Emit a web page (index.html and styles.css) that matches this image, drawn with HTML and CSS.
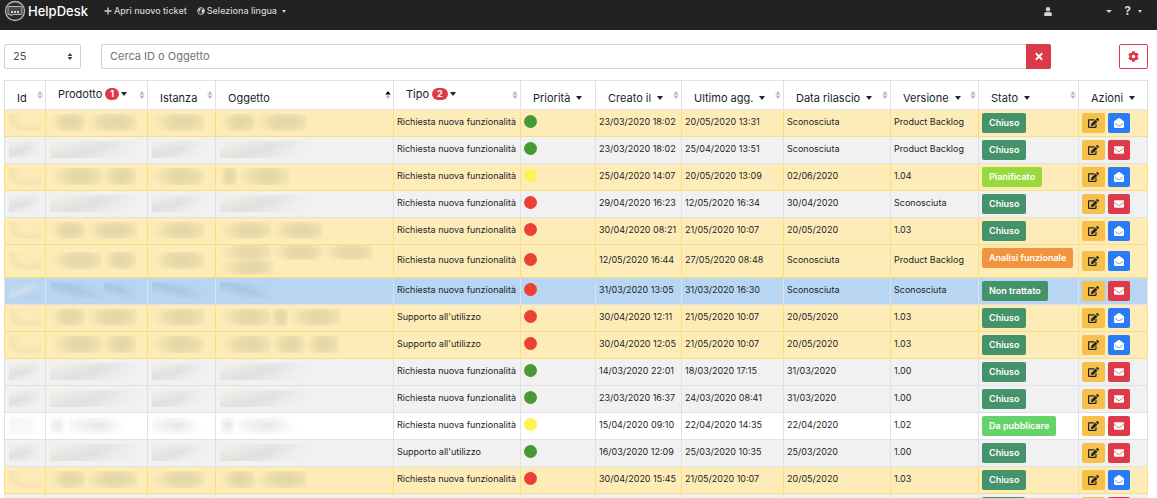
FILE: index.html
```html
<!DOCTYPE html>
<html lang="it">
<head>
<meta charset="utf-8">
<title>HelpDesk</title>
<link rel="stylesheet" href="styles.css">
</head>
<body>
<svg class="sprite" aria-hidden="true">
  <symbol id="i-x" viewBox="0 0 352 512"><path d="M243 256l100-100c12-12 12-32 0-44l-22-23c-13-12-33-12-45 0L176 189 76 89c-12-12-32-12-45 0L9 112c-12 12-12 32 0 44l100 100L9 356c-12 12-12 32 0 44l22 23c13 12 33 12 45 0l100-100 100 100c12 12 32 12 45 0l22-23c12-12 12-32 0-44z"/></symbol>
  <symbol id="i-cog" viewBox="0 0 512 512"><path d="M487.400 315.700l-42.600-24.600c4.300-23.200 4.300-47 0-70.200l42.600-24.600c4.900-2.800 7.100-8.600 5.500-14-11.100-35.600-30-67.800-54.700-94.600-3.800-4.100-10-5.100-14.800-2.300L380.800 110c-17.900-15.400-38.500-27.300-60.800-35.100V25.800c0-5.600-3.900-10.500-9.400-11.700-36.700-8.200-74.300-7.800-109.200 0-5.500 1.200-9.400 6.100-9.400 11.700V75c-22.200 7.900-42.800 19.800-60.800 35.100L88.700 85.500c-4.900-2.800-11-1.900-14.800 2.300-24.700 26.700-43.600 58.900-54.700 94.600-1.700 5.400.6 11.200 5.500 14L67.300 221c-4.300 23.200-4.300 47 0 70.200l-42.600 24.600c-4.900 2.800-7.100 8.600-5.500 14 11.100 35.600 30 67.800 54.700 94.600 3.800 4.100 10 5.100 14.800 2.300l42.600-24.600c17.900 15.400 38.500 27.300 60.800 35.100v49.200c0 5.600 3.900 10.500 9.400 11.700 36.700 8.200 74.300 7.800 109.200 0 5.500-1.200 9.400-6.100 9.400-11.700v-49.200c22.200-7.900 42.800-19.800 60.800-35.100l42.600 24.600c4.900 2.800 11 1.900 14.800-2.300 24.700-26.700 43.600-58.900 54.700-94.600 1.500-5.500-.7-11.300-5.600-14.100zM256 336c-44.100 0-80-35.900-80-80s35.900-80 80-80 80 35.900 80 80-35.900 80-80 80z"/></symbol>
  <symbol id="i-user" viewBox="0 0 448 512"><path d="M224 256a128 128 0 1 0 0-256 128 128 0 0 0 0 256zm90 32h-17a174 174 0 0 1-146 0h-17A134 134 0 0 0 0 422v42c0 26 22 48 48 48h352c26 0 48-22 48-48v-42a134 134 0 0 0-134-134z"/></symbol>
  <symbol id="i-edit" viewBox="0 0 576 512"><path d="M402.600 83.200l90.200 90.200c3.800 3.800 3.800 10 0 13.800L274.400 405.600l-92.800 10.300c-12.400 1.400-22.900-9.100-21.500-21.500l10.300-92.800L388.800 83.200c3.800-3.800 10-3.800 13.800 0zm162-22.900l-48.800-48.800c-15.200-15.200-39.900-15.200-55.200 0l-35.400 35.400c-3.800 3.800-3.800 10 0 13.800l90.200 90.200c3.800 3.800 10 3.800 13.800 0l35.400-35.400c15.200-15.300 15.200-40 0-55.200zM384 346.200V448H64V128h229.800c3.200 0 6.200-1.300 8.500-3.500l40-40c7.600-7.600 2.200-20.500-8.500-20.500H48C21.500 64 0 85.500 0 112v352c0 26.500 21.500 48 48 48h352c26.500 0 48-21.500 48-48V306.200c0-10.700-12.900-16-20.500-8.500l-40 40c-2.200 2.300-3.500 5.300-3.500 8.500z"/></symbol>
  <symbol id="i-mail" viewBox="0 0 512 512"><path d="M502 191c4-3 10 0 10 5v204c0 27-21 48-48 48H48c-27 0-48-21-48-48V196c0-5 6-8 10-5 22 17 52 40 155 114 21 16 57 49 91 48 34 1 71-33 91-48 103-74 133-97 155-114zM256 320c23 0 57-29 74-42 133-96 143-104 173-128 6-4 9-11 9-18v-20c0-26-21-48-48-48H48c-27 0-48 22-48 48v20c0 7 3 14 9 18 30 24 40 32 173 128 17 13 51 42 74 42z"/></symbol>
  <symbol id="i-open" viewBox="0 0 512 512"><path d="M512 464c0 27-21 48-48 48H48c-27 0-48-21-48-48V201a48 48 0 0 1 18-38c25-20 46-36 164-122 17-12 51-41 74-41s57 29 74 41c118 86 139 102 164 122a48 48 0 0 1 18 38zm-66-196c-3-4-7-4-11-2-23 17-57 42-105 76-17 13-51 42-74 42s-57-29-74-42c-48-34-82-59-105-76-4-2-8-2-11 2l-9 13c-3 4-2 9 2 11 23 17 57 42 105 76 19 14 56 48 92 48s73-34 92-48c48-34 82-59 105-76 4-2 5-7 2-11z"/></symbol>
  <symbol id="i-sort" viewBox="0 0 6 8"><path d="M3 0l2.700 3.500H.3z"/><path d="M3 8L.3 4.500h5.400z"/></symbol>
</svg>

<nav class="navbar">
  <a class="brand" href="#">
    <svg class="logo" viewBox="0 0 22 22" stroke="#b9b9b9"><circle cx="11" cy="11" r="9.500" fill="#2c2c2c" stroke-width="1.300"/><path d="M5 6.500h12a1 1 0 0 1 1 1v6a1 1 0 0 1-1 1H9l-2 1.500v-1.500H5a1 1 0 0 1-1-1v-6a1 1 0 0 1 1-1z" fill="#4a4a4a"/><path d="M7 12h2m1 0h2m1 0h2" fill="none" stroke="#fff" stroke-width="1.300"/></svg>
    <span>HelpDesk</span>
  </a>
  <a class="nav-link" href="#"><svg class="ico" viewBox="0 0 8 8"><path d="M4 .5v7M.5 4h7" stroke="currentColor" stroke-width="1.300"/></svg>Apri nuovo ticket</a>
  <a class="nav-link" href="#"><svg class="ico" viewBox="0 0 9 9"><circle cx="4.500" cy="4.500" r="3.800" fill="none" stroke="currentColor"/><path d="M1.200 3l2-1.700 1.300.6-.5 1.300-1 .5.300 1.500-.8.300zM5 3.500l2.800-1.300.6 2-1.600 3-1.300-.2-.2-1.600z" fill="currentColor"/></svg>Seleziona lingua<i class="caret"></i></a>
  <div class="nav-right">
    <a class="user" href="#" aria-label="Utente"><svg class="ico" viewBox="0 0 448 512"><use href="#i-user"/></svg><i class="caret"></i></a>
    <a class="help" href="#" aria-label="Aiuto">?<i class="caret"></i></a>
  </div>
</nav>

<main>
  <form class="toolbar">
    <div class="length">
      <select aria-label="Righe per pagina"><option>25</option><option>50</option><option>100</option></select>
      <svg viewBox="0 0 6 8"><use href="#i-sort"/></svg>
    </div>
    <div class="search">
      <input type="text" placeholder="Cerca ID o Oggetto" aria-label="Cerca ID o Oggetto">
      <button type="button" aria-label="Cancella"><svg class="x" viewBox="0 0 352 512"><use href="#i-x"/></svg></button>
    </div>
    <button type="button" class="settings" aria-label="Impostazioni"><svg viewBox="0 0 512 512"><use href="#i-cog"/></svg></button>
  </form>

  <table class="tickets">
    <colgroup>
      <col class="c-id"><col class="c-prod"><col class="c-ist"><col class="c-ogg"><col class="c-tipo"><col class="c-pri"><col class="c-cre"><col class="c-agg"><col class="c-ril"><col class="c-ver"><col class="c-sta"><col class="c-azi">
    </colgroup>
    <thead><tr id="head"></tr></thead>
    <tbody id="rows"></tbody>
  </table>
</main>
<script src="app.js"></script>
</body>
</html>
```

FILE: styles.css
```css
* { box-sizing: border-box; }
html, body { height: 100%; }
body {
  margin: 0;
  overflow: hidden;
  background: #fff;
  color: #212529;
  font-family: Inter, "Liberation Sans", sans-serif;
  font-size: 9px;
  line-height: 14px;
}
a { color: inherit; text-decoration: none; }
button { padding: 0; border: 0; cursor: pointer; font: inherit; }
svg { display: block; fill: currentColor; }
.sprite { display: none; }

.caret {
  display: inline-block;
  border: solid transparent;
  border-width: 3px 3px 0;
  border-top-color: currentColor;
}

/* Top bar */
.navbar {
  display: flex;
  align-items: center;
  height: 30px;
  padding: 0 15px 8px 4px;
  background: #222;
  color: #d3d3d3;
  font-weight: 500;
}
.brand { display: flex; align-items: center; gap: 2px; margin-right: 16px; color: #fff; font-size: 13px; }
.logo { width: 22px; height: 22px; }
.nav-link { display: flex; align-items: center; gap: 2px; margin-right: 10px; }
.nav-link .ico { width: 8px; height: 8px; }
.nav-link .caret, .help .caret { margin-left: 3px; border-width: 3px 2px 0; }
.nav-right { display: flex; align-items: center; gap: 12px; margin-left: auto; }
.user { display: flex; align-items: center; gap: 54px; }
.user .ico { width: 8px; height: 9px; }
.help { display: flex; align-items: center; gap: 4px; font-size: 12px; font-weight: 700; }

/* Toolbar */
main { padding: 14px 9px 0 4px; }
.toolbar { display: flex; height: 25px; margin-bottom: 11px; }
.length { position: relative; width: 77px; margin-right: 20px; }
.length select {
  appearance: none;
  width: 100%;
  height: 100%;
  padding: 0 8px 2px;
  border: 1px solid #ced4da;
  border-radius: 2px;
  background: #fff;
  color: #495057;
  font: inherit;
  font-size: 11px;
}
.length svg { position: absolute; top: 9px; right: 8px; width: 6px; height: 7px; color: #343a40; pointer-events: none; }
.search { display: flex; flex: 1; margin-right: 68px; }
.search input {
  flex: 1;
  min-width: 0;
  padding: 0 8px 2px;
  border: 1px solid #ced4da;
  border-right: 0;
  border-radius: 2px 0 0 2px;
  font: inherit;
  font-size: 11px;
}
.search input::placeholder { color: #6c757d; opacity: 1; }
.search button, .settings { display: flex; align-items: center; justify-content: center; }
.search button { width: 25px; border-radius: 0 2px 2px 0; background: #dc3a48; color: #fff; }
.search .x { width: 8px; height: 11px; }
.settings { width: 29px; border: 1px solid #dc3a48; border-radius: 2px; background: #fff; color: #dc3a48; }
.settings svg { width: 11px; height: 11px; }

/* Ticket table */
.tickets { width: 100%; border-collapse: collapse; table-layout: fixed; }
.c-id { width: 41px; }
.c-prod, .c-agg { width: 102px; }
.c-ist { width: 68px; }
.c-tipo { width: 127px; }
.c-pri { width: 75px; }
.c-cre { width: 86px; }
.c-ril { width: 107px; }
.c-ver { width: 88px; }
.c-sta { width: 100px; }
.c-azi { width: 69px; }

th, td { border: 1px solid #dee2e6; white-space: nowrap; }
th { height: 29px; padding: 6px 3px 0 12px; font-size: 11px; font-weight: 400; text-align: left; vertical-align: top; }
.th { display: flex; align-items: flex-start; }
.th .label { display: flex; align-items: center; gap: 6px; padding-top: 4px; }
.th .label.counted { gap: 3px; padding-top: 0; }
.th .caret { border-width: 4px 3px 0; }
.th .counted .caret { margin-left: -1px; }
.th .sort { flex: none; width: 6px; height: 8px; margin: 4px -1px 0 auto; color: #b9bcbf; }
.sort.asc .up { fill: #000; }
.count { padding: 0 5px; border-radius: 6px; background: #dc3a48; color: #fff; font-size: 9px; font-weight: 700; line-height: 12px; }

td { height: 27px; padding: 0 3px; background: #f1f1f1; vertical-align: middle; }
.warn td { background: #feecb8; border-color: #fadf7e; }
.sel td { background: #b8d5f1; }
.plain td { background: #fff; }
td.state { padding-top: 3px; vertical-align: top; }
td.kind, td.date { padding-bottom: 2px; }

.dot { display: block; width: 13px; height: 13px; margin-bottom: 3px; border-radius: 50%; }
.dot.g { background: #479a32; }
.dot.y { background: #fef350; }
.dot.r { background: #eb4034; }

.badge { display: inline-block; padding: 0 7px; border-radius: 2px; background: #45936a; color: #fff; font-weight: 600; line-height: 20px; vertical-align: top; }
.badge.plan { background: #96da3d; }
.badge.func { background: #f2933e; }
.badge.pub { background: #66d36a; }

.actions { display: flex; gap: 3px; }
.actions button { display: flex; align-items: center; justify-content: center; width: 22px; height: 20px; border-radius: 2px; color: #fff; }
.actions .edit { width: 23px; background: #f6c04a; color: #212529; }
.actions .edit svg { width: 11px; height: 10px; }
.actions .mail { background: #dc3a48; }
.actions .open { background: #2a7bf6; }
.actions .mail svg, .actions .open svg { width: 10px; height: 10px; }

/* Obscured values */
.masks { display: flex; flex-wrap: wrap; padding: 0 1px 2px; }
.mask { height: 17px; background: radial-gradient(ellipse 60% 85% at 58% 48%, #e3d6a5 0%, #e9dcaa 45%, #f6e6b3 75%, #feecb8 100%); }
.mask.low { height: 15px; }
.c-first .mask { background: radial-gradient(ellipse 80% 90% at 65% 25%, #fdebb7 30%, #f4e3b0 75%, #feecb8 100%); }
tr:not(.warn) .mask { background: linear-gradient(165deg, #f2efe8 10%, #e0e0e0 50%, #e8e8e8 70%, #f1f1f1 95%); -webkit-mask-image: linear-gradient(90deg, #000 55%, transparent); mask-image: linear-gradient(90deg, #000 55%, transparent); }
tr.sel .mask { background: linear-gradient(15deg, #b8d5f1 20%, #a9c6e3 50%, #b8d5f1 85%); }
tr.plain .mask { background: radial-gradient(ellipse 70% 70% at 50% 50%, #e6e9ea 5%, #f2f4f4 50%, #fff 100%); }
tr.sel .c-first .mask { background: linear-gradient(160deg, #b8d5f1 20%, #cfdfef 50%, #b3cee9 80%); }
tr.plain .c-first .mask { background: #f7f8f8; }
```

FILE: app.js
```js
const columns = [
  ['Id', { sort: true }],
  ['Prodotto', { count: 1, caret: true, sort: true }],
  ['Istanza', { sort: true }],
  ['Oggetto', { sort: true, asc: true }],
  ['Tipo', { count: 2, caret: true, sort: true }],
  ['Priorità', { caret: true }],
  ['Creato il', { caret: true, sort: true }],
  ['Ultimo agg.', { caret: true, sort: true }],
  ['Data rilascio', { caret: true, sort: true }],
  ['Versione', { caret: true, sort: true }],
  ['Stato', { caret: true, sort: true }],
  ['Azioni', { caret: true }]
];

const R = 'Richiesta nuova funzionalità';
const S = "Supporto all'utilizzo";
const U = 'Sconosciuta';
const P = 'Product Backlog';
const C = ['Chiuso', ''];

// row style, product masks, subject masks, type, priority, created, updated, release, version, state, mail icon
const tickets = [
  ['warn', [35, 52], [35, 52], R, 'g', '23/03/2020 18:02', '20/05/2020 13:31', U, P, C, 'open'],
  ['', [90], [90], R, 'g', '23/03/2020 18:02', '25/04/2020 13:51', U, P, C, 'mail'],
  ['warn', [52, 34], [17, 52], R, 'y', '25/04/2020 14:07', '20/05/2020 13:09', '02/06/2020', '1.04', ['Pianificato', 'plan'], 'open'],
  ['', [90], [90], R, 'r', '29/04/2020 16:23', '12/05/2020 16:34', '30/04/2020', U, C, 'mail'],
  ['warn', [35, 52], [51, 52], R, 'r', '30/04/2020 08:21', '21/05/2020 10:07', '20/05/2020', '1.03', C, 'open'],
  ['warn', [52, 34], [51, 51, 51, 53], R, 'r', '12/05/2020 16:44', '27/05/2020 08:48', U, P, ['Analisi funzionale', 'func'], 'open'],
  ['sel', [54, 34], [54], R, 'r', '31/03/2020 13:05', '31/03/2020 16:30', U, U, ['Non trattato', ''], 'mail'],
  ['warn', [35, 52], [51, 17, 52], S, 'r', '30/04/2020 12:11', '21/05/2020 10:07', '20/05/2020', '1.03', C, 'open'],
  ['warn', [52, 34], [51, 34, 34], S, 'r', '30/04/2020 12:05', '21/05/2020 10:07', '20/05/2020', '1.03', C, 'open'],
  ['', [90], [90], R, 'g', '14/03/2020 22:01', '18/03/2020 17:15', '31/03/2020', '1.00', C, 'mail'],
  ['', [90], [90], R, 'g', '23/03/2020 16:37', '24/03/2020 08:41', '31/03/2020', '1.00', C, 'mail'],
  ['plain', [18, 62], [18, 62], R, 'y', '15/04/2020 09:10', '22/04/2020 14:35', '22/04/2020', '1.02', ['Da pubblicare', 'pub'], 'mail'],
  ['', [90], [90], S, 'g', '16/03/2020 12:09', '25/03/2020 10:35', '25/03/2020', '1.00', C, 'mail'],
  ['warn', [35, 52], [35, 52], R, 'r', '30/04/2020 15:45', '21/05/2020 10:07', '20/05/2020', '1.03', C, 'open'],
  ['', [], [], '', '', '', '', '', '', ['&nbsp;'.repeat(13), ''], 'mail']
];

const icon = (id, box) => `<svg viewBox="${box}"><use href="#i-${id}"/></svg>`;
const sortIcon = asc => `<svg class="sort ${asc ? 'asc' : ''}" viewBox="0 0 6 8"><path class="up" d="M3 0l2.700 3.500H.3z"/><path class="down" d="M3 8L.3 4.500h5.400z"/></svg>`;

document.getElementById('head').innerHTML = columns.map(([name, o]) => `
  <th scope="col"><div class="th">
    <span class="label ${o.count ? 'counted' : ''}">${name}${o.count ? `<span class="count">${o.count}</span>` : ''}${o.caret ? '<i class="caret"></i>' : ''}</span>
    ${o.sort ? sortIcon(o.asc) : ''}
  </div></th>`).join('');

const masks = widths => {
  const low = widths.length > 3 ? 'low' : '';
  return `<div class="masks">${widths.map(w => `<span class="mask ${low}" style="width:${w}px"></span>`).join('')}</div>`;
};

document.getElementById('rows').innerHTML = tickets.map(([style, prod, subj, kind, pri, created, updated, release, version, state, mail]) => `
  <tr class="${style}">
    <td class="c-first">${masks([32])}</td>
    <td>${masks(prod)}</td>
    <td>${masks([52])}</td>
    <td>${masks(subj)}</td>
    <td class="kind">${kind}</td>
    <td><span class="dot ${pri}"></span></td>
    <td class="date">${created}</td>
    <td class="date">${updated}</td>
    <td class="date">${release}</td>
    <td class="date">${version}</td>
    <td class="state"><span class="badge ${state[1]}">${state[0]}</span></td>
    <td><div class="actions">
      <button type="button" class="edit" aria-label="Modifica">${icon('edit', '0 0 576 512')}</button>
      <button type="button" class="${mail}" aria-label="Messaggi">${icon(mail, '0 0 512 512')}</button>
    </div></td>
  </tr>`).join('');
```
